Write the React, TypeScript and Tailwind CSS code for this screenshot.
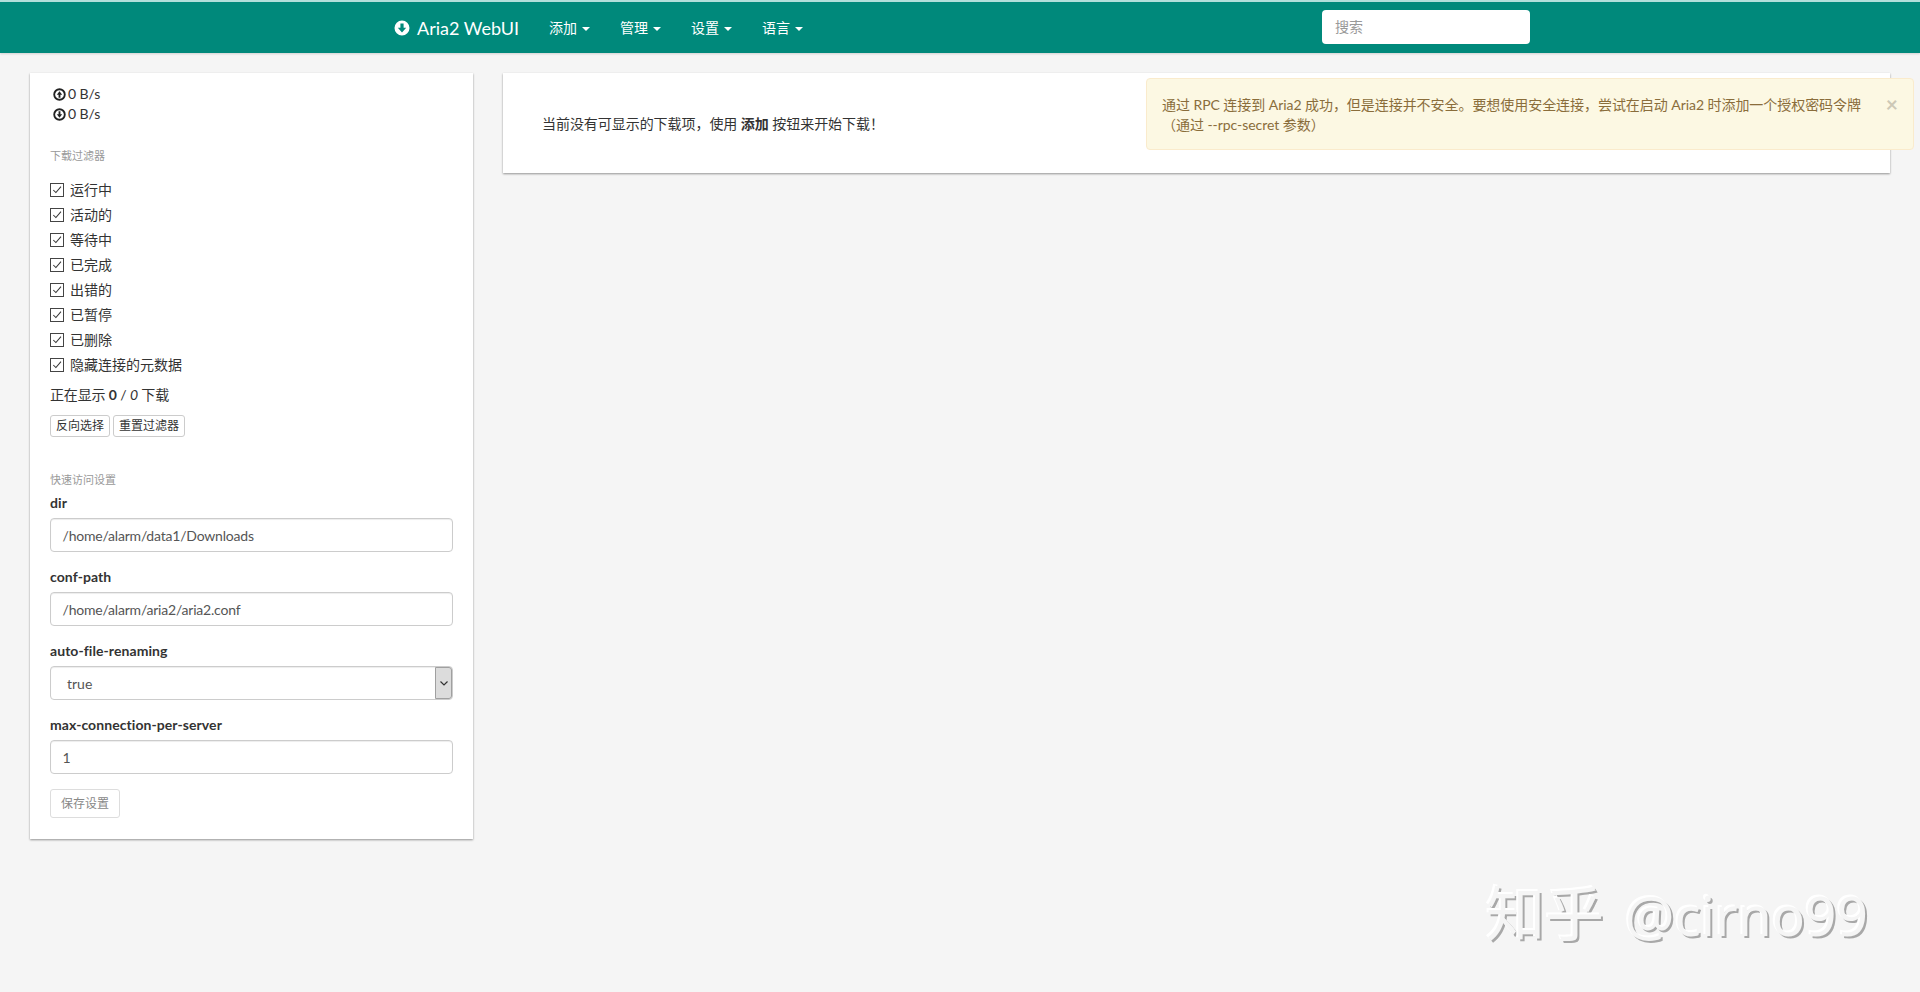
import React from "react";

const cjk = "font-['Lato','Noto_Sans','Noto_Sans_CJK_SC',sans-serif]";

function CircleArrow({ down, className }: { down?: boolean; className?: string }) {
  return (
    <svg viewBox="0 0 16 16" className={className} fill="currentColor">
      <path
        fillRule="evenodd"
        d={
          down
            ? "M8 0.5a7.5 7.5 0 1 0 0 15a7.5 7.5 0 0 0 0-15zM6.4 3.5h3.2v4.2h2.6L8 12.6L3.8 7.7h2.6z"
            : "M8 0.5a7.5 7.5 0 1 0 0 15a7.5 7.5 0 0 0 0-15zM8 3.4l4.2 4.9H9.6v4.2H6.4V8.3H3.8z"
        }
      />
    </svg>
  );
}

function OutlineCircleArrow({ down }: { down?: boolean }) {
  return (
    <svg viewBox="0 0 14 14" className="w-[13px] h-[13px] text-[#222]" fill="currentColor">
      <path
        fillRule="evenodd"
        d="M7 0.3a6.7 6.7 0 1 0 0 13.4a6.7 6.7 0 0 0 0-13.4zM7 2.3a4.7 4.7 0 1 1 0 9.4a4.7 4.7 0 0 1 0-9.4z"
      />
      {down ? (
        <path d="M6 3.4h2v3.4h1.9L7 10.4L4.1 6.8H6z" />
      ) : (
        <path d="M7 3.6l2.9 3.6H8v3.4H6V7.2H4.1z" />
      )}
    </svg>
  );
}

function Caret() {
  return <span className="inline-block ml-[5px] w-0 h-0 border-x-[4px] border-x-transparent border-t-[4px] border-t-white align-middle" />;
}

function Check({ label }: { label: string }) {
  return (
    <label className="flex items-center h-[25px]">
      <span className="w-[14px] h-[14px] border border-[#444] bg-white flex items-center justify-center">
        <svg viewBox="0 0 13 13" className="w-[12px] h-[12px]" fill="none" stroke="#333" strokeWidth="1.1">
          <path d="M2.5 6.5L5.3 9.3L10.8 2.8" />
        </svg>
      </span>
      <span className="ml-[6px] text-[14px] text-[#333]">{label}</span>
    </label>
  );
}

function Field({ label, value }: { label: string; value: string }) {
  return (
    <div className="mb-[15px]">
      <div className="h-[20px] leading-[20px] mb-[5px] text-[14px] font-bold text-[#333] tracking-[0.07px]">{label}</div>
      <div className="h-[34px] border border-[#ccc] rounded-[4px] bg-white pl-[11.5px] pr-[12px] text-[14px] leading-[34px] text-[#555] tracking-[-0.2px] shadow-[inset_0_1px_1px_rgba(0,0,0,0.075)]">
        {value}
      </div>
    </div>
  );
}

const filters = ["运行中", "活动的", "等待中", "已完成", "出错的", "已暂停", "已删除", "隐藏连接的元数据"];
const menus = ["添加", "管理", "设置", "语言"];

export default function App() {
  return (
    <div className={`relative h-[992px] overflow-hidden bg-[#f5f5f5] ${cjk} text-[14px] text-[#333]`}>
      <nav className="h-[53px] bg-[#00897b] border-t-2 border-t-[#b2dfdb] shadow-[0_1px_2px_rgba(0,0,0,0.15)] flex items-center">
        <div className="ml-[394px] flex items-center text-white">
          <CircleArrow down className="w-[16px] h-[16px]" />
          <span className="ml-[7px] text-[18px] leading-[20px]">Aria2 WebUI</span>
        </div>
        <div className="ml-[30px] flex text-white">
          {menus.map((m) => (
            <span key={m} className="w-[71px] text-[14px] whitespace-nowrap">
              {m}
              <Caret />
            </span>
          ))}
        </div>
        <div className="ml-[489px] mb-[1px] w-[208px] h-[34px] bg-white rounded-[4px] px-[13px] text-[14px] leading-[34px] text-[#999]">搜索</div>
      </nav>

      <main className="flex items-start pt-[20px] pl-[30px]">
        <aside className="w-[443px] h-[766px] bg-white shadow-[0_1px_2px_rgba(0,0,0,0.4)] px-[20px] pt-[11px]">
          <div className="pl-[3px] leading-[20px] tracking-[-0.1px]">
            <div className="flex items-center gap-[2px]"><OutlineCircleArrow /><span>0 B/s</span></div>
            <div className="flex items-center gap-[2px]"><OutlineCircleArrow down /><span>0 B/s</span></div>
          </div>
          <div className="mt-[24px] mb-[13px] h-[16px] leading-[16px] text-[11px] text-[#999]">下载过滤器</div>
          {filters.map((f) => (
            <Check key={f} label={f} />
          ))}
          <div className="mt-[8px] leading-[20px] tracking-[-0.15px]">
            正在显示 <b>0</b> / <i>0</i> 下载
          </div>
          <div className="mt-[10px] flex gap-[3px]">
            <button className="h-[22px] w-[60px] border border-[#ccc] rounded-[3px] bg-white text-[12px] leading-[20px] text-[#333]">反向选择</button>
            <button className="h-[22px] w-[72px] border border-[#ccc] rounded-[3px] bg-white text-[12px] leading-[20px] text-[#333]">重置过滤器</button>
          </div>
          <div className="mt-[35px] h-[16px] leading-[16px] text-[11px] text-[#999]">快速访问设置</div>
          <div className="mt-[5px]">
            <Field label="dir" value="/home/alarm/data1/Downloads" />
            <Field label="conf-path" value="/home/alarm/aria2/aria2.conf" />
            <div className="mb-[15px]">
              <div className="h-[20px] leading-[20px] mb-[5px] text-[14px] font-bold text-[#333] tracking-[0.07px]">auto-file-renaming</div>
              <div className="h-[34px] border border-[#ccc] rounded-[4px] bg-white pl-[16px] text-[14px] leading-[34px] text-[#555] flex justify-between shadow-[inset_0_1px_1px_rgba(0,0,0,0.075)]">
                <span>true</span>
                <span className="w-[17px] h-[32px] bg-[#dcdcdc] border border-[#a0a0a0] rounded-r-[3px] flex items-center justify-center">
                  <svg viewBox="0 0 10 10" className="w-[10px] h-[10px]" fill="none" stroke="#333" strokeWidth="1.2">
                    <path d="M1.5 3.5L5 7L8.5 3.5" />
                  </svg>
                </span>
              </div>
            </div>
            <Field label="max-connection-per-server" value="1" />
          </div>
          <button className="h-[29px] w-[70px] border border-[#ddd] rounded-[3px] bg-white text-[12px] text-[#888]">保存设置</button>
        </aside>

        <section className="ml-[30px] w-[1387px] h-[100px] bg-white shadow-[0_1px_2px_rgba(0,0,0,0.4)] pl-[39px] flex items-center">
          <p className="tracking-[-0.05px]">
            当前没有可显示的下载项，使用 <b>添加</b> 按钮来开始下载！
          </p>
        </section>
      </main>

      <div className="absolute left-[1146px] top-[78px] w-[768px] h-[72px] bg-[#fcf8e3] border border-[#faebcc] rounded-[4px] pl-[15px] pr-[35px] pt-[16px] pb-[14px] text-[14px] leading-[20px] text-[#8a6d3b] tracking-[-0.05px]">
        通过 RPC 连接到 Aria2 成功，但是连接并不安全。要想使用安全连接，尝试在启动 Aria2 时添加一个授权密码令牌（通过 --rpc-secret 参数）
        <span className="absolute right-[15px] top-[13px] text-[21px] leading-[24px] font-bold text-[#cdc8b6]">×</span>
      </div>

      <div className="absolute left-[1486px] top-[877px] whitespace-nowrap text-[59px] leading-[72px] text-[#f5f5f5] font-['Noto_Sans','Noto_Sans_CJK_SC',sans-serif] [text-shadow:-2px_-2px_0_#ffffff,2px_2px_0_#a8a8a8]">
        知乎<span className="ml-[21px] text-[55px]">@cirno99</span>
      </div>
    </div>
  );
}
